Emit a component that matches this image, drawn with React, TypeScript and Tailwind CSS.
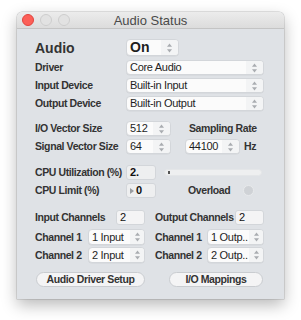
import React from "react";

const font = { fontFamily: '"Liberation Sans", Arial, sans-serif' };

function Arrows() {
  return (
    <svg width="7" height="10" viewBox="0 0 7 10" className="shrink-0">
      <path d="M3.5 0.5 L6 3.8 H1 Z" fill="#a9acb0" />
      <path d="M3.5 9.5 L6 6.2 H1 Z" fill="#a9acb0" />
    </svg>
  );
}

function Select({
  value,
  w,
  h = "h-[15px]",
  bold = false,
  aw = "w-[17px]",
}: {
  value: string;
  w: string;
  h?: string;
  bold?: boolean;
  aw?: string;
}) {
  return (
    <div
      className={`${w} ${h} shrink-0 flex rounded-[4px] border border-[#d3d6da] bg-[#fbfbfb] shadow-[0_0.5px_0_rgba(0,0,0,0.06)] overflow-hidden`}
    >
      <div
        className={`flex-1 min-w-0 flex items-center pl-[3px] text-[#1e1e1e] whitespace-nowrap overflow-hidden ${
          bold ? "text-[14px] font-bold" : "text-[11px] tracking-[-0.3px]"
        }`}
      >
        {value}
      </div>
      <div className={`${aw} shrink-0 bg-[#f3f4f5] flex items-center justify-center`}>
        <Arrows />
      </div>
    </div>
  );
}

function NumBox({
  value,
  w,
  bold = false,
  arrow = false,
  bg = "bg-[#eeeff0]",
}: {
  value: string;
  w: string;
  bold?: boolean;
  arrow?: boolean;
  bg?: string;
}) {
  return (
    <div
      className={`${w} h-[15px] shrink-0 flex items-center rounded-[3px] border border-[#d3d6da] ${bg} pl-[3px] text-[11px] text-[#111] ${
        bold ? "font-bold" : ""
      }`}
    >
      {arrow && (
        <svg width="4" height="6" viewBox="0 0 4 6" className="mr-[2px]">
          <path d="M0 0 L4 3 L0 6 Z" fill="#9a9da1" />
        </svg>
      )}
      {value}
    </div>
  );
}

function Label({ children, w }: { children: React.ReactNode; w?: string }) {
  return (
    <div
      className={`${w ?? ""} text-[10.5px] font-bold text-[#333] leading-none shrink-0 whitespace-nowrap tracking-[-0.4px]`}
    >
      {children}
    </div>
  );
}

export default function App() {
  return (
    <div className="w-[301px] h-[320px] bg-white pt-[12px] pl-[17px]" style={font}>
      <div className="w-[267px] h-[287px] rounded-t-[5px] bg-[#dfe2e6] shadow-[0_6px_16px_rgba(0,0,0,0.28),0_0_0_0.5px_rgba(0,0,0,0.2)] flex flex-col overflow-hidden">
        {/* Title bar */}
        <div className="h-[17px] shrink-0 relative flex items-center justify-center bg-gradient-to-b from-[#ececec] to-[#dcdcdc] border-b border-[#c4c4c4]">
          <div className="absolute left-[5px] top-[2px] flex gap-[6px]">
            <span className="w-[12px] h-[12px] rounded-full bg-[#fc5f57] border border-[#e0443e]" />
            <span className="w-[12px] h-[12px] rounded-full bg-[#e2e2e2] border border-[#cdcdcd]" />
            <span className="w-[12px] h-[12px] rounded-full bg-[#e2e2e2] border border-[#cdcdcd]" />
          </div>
          <span className="text-[13px] text-[#4a4a4a] leading-none mt-[1px]">Audio Status</span>
        </div>

        {/* Body */}
        <div className="flex flex-col pl-[18px] pt-[10px]">
          <div className="flex items-center h-[17px]">
            <Label w="w-[91px]">
              <span className="text-[14px] tracking-normal">Audio</span>
            </Label>
            <Select value="On" w="w-[53px]" h="h-[17px]" bold />
          </div>

          <div className="flex items-center h-[15px] mt-[4px]">
            <Label w="w-[91px]">Driver</Label>
            <Select value="Core Audio" w="w-[138px]" />
          </div>
          <div className="flex items-center h-[15px] mt-[3px]">
            <Label w="w-[91px]">Input Device</Label>
            <Select value="Built-in Input" w="w-[138px]" />
          </div>
          <div className="flex items-center h-[15px] mt-[3px]">
            <Label w="w-[91px]">Output Device</Label>
            <Select value="Built-in Output" w="w-[138px]" />
          </div>

          <div className="flex items-center h-[15px] mt-[10px]">
            <Label w="w-[91px]">I/O Vector Size</Label>
            <Select value="512" w="w-[45px]" />
            <Label>
              <span className="ml-[18px]">Sampling Rate</span>
            </Label>
          </div>
          <div className="flex items-center h-[15px] mt-[3px]">
            <Label w="w-[91px]">Signal Vector Size</Label>
            <Select value="64" w="w-[45px]" />
            <div className="ml-[14px]">
              <Select value="44100" w="w-[55px]" />
            </div>
            <Label>
              <span className="ml-[4px]">Hz</span>
            </Label>
          </div>

          <div className="flex items-center h-[15px] mt-[11px]">
            <Label w="w-[91px]">CPU Utilization (%)</Label>
            <NumBox value="2." w="w-[30px]" bold />
            <div className="ml-[8px] w-[98px] h-[7px] rounded-full bg-[#eeeff0] border border-[#e4e6e8] flex items-center pl-[3px]">
              <span className="w-[2px] h-[3px] bg-[#555]" />
            </div>
          </div>
          <div className="flex items-center h-[15px] mt-[3px]">
            <Label w="w-[91px]">CPU Limit (%)</Label>
            <NumBox value="0" w="w-[30px]" bold arrow />
            <Label>
              <span className="ml-[32px]">Overload</span>
            </Label>
            <span className="ml-[13px] w-[11px] h-[11px] rounded-full bg-[#cfd2d6] border border-[#e8eaec]" />
          </div>

          <div className="flex items-center h-[15px] mt-[12px]">
            <Label w="w-[81px]">Input Channels</Label>
            <NumBox value="2" w="w-[29px]" bg="bg-[#f4f4f5]" />
            <div className="w-[10px] shrink-0" />
            <Label w="w-[80px]">Output Channels</Label>
            <NumBox value="2" w="w-[29px]" bg="bg-[#f4f4f5]" />
          </div>
          <div className="flex items-center h-[16px] mt-[4px]">
            <Label w="w-[53px]">Channel 1</Label>
            <Select value="1 Input" w="w-[57px]" h="h-[16px]" aw="w-[14px]" />
            <div className="w-[10px] shrink-0" />
            <Label w="w-[52px]">Channel 1</Label>
            <Select value="1 Outp.." w="w-[57px]" h="h-[16px]" aw="w-[14px]" />
          </div>
          <div className="flex items-center h-[16px] mt-[2px]">
            <Label w="w-[53px]">Channel 2</Label>
            <Select value="2 Input" w="w-[57px]" h="h-[16px]" aw="w-[14px]" />
            <div className="w-[10px] shrink-0" />
            <Label w="w-[52px]">Channel 2</Label>
            <Select value="2 Outp.." w="w-[57px]" h="h-[16px]" aw="w-[14px]" />
          </div>

          <div className="flex items-center h-[15px] mt-[9px]">
            <button className="w-[109px] h-[15px] rounded-full bg-[#f4f4f5] border border-[#c9ccd0] text-[10.5px] font-bold text-[#333] leading-none ml-[1px] tracking-[-0.4px]">
              Audio Driver Setup
            </button>
            <button className="ml-[24px] w-[94px] h-[15px] rounded-full bg-[#f4f4f5] border border-[#c9ccd0] text-[10.5px] font-bold text-[#333] leading-none tracking-[-0.4px]">
              I/O Mappings
            </button>
          </div>
        </div>
      </div>
    </div>
  );
}
